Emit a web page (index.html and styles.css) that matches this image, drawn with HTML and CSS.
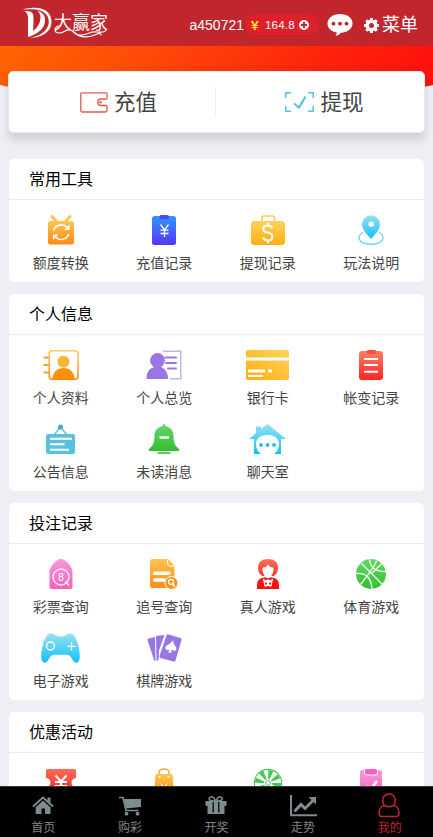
FILE: index.html
```html
<!DOCTYPE html>
<html lang="zh-CN">
<head>
<meta charset="utf-8">
<meta name="viewport" content="width=device-width, initial-scale=1">
<title>我的</title>
<link rel="stylesheet" href="styles.css">
</head>
<body>
<svg class="defs" width="0" height="0" aria-hidden="true">
  <defs>
    <linearGradient id="orange" x2="0" y2="1"><stop stop-color="#ffc550"/><stop offset="1" stop-color="#ff8a13"/></linearGradient>
    <linearGradient id="yellow" x2="0" y2="1"><stop stop-color="#ffd25a"/><stop offset="1" stop-color="#ffb010"/></linearGradient>
    <linearGradient id="gold" y1="1" x2="1" y2="0"><stop stop-color="#ffad0d"/><stop offset="1" stop-color="#ffd45f"/></linearGradient>
    <linearGradient id="blue" x2="0" y2="1"><stop stop-color="#3196ff"/><stop offset="1" stop-color="#5735f4"/></linearGradient>
    <linearGradient id="sky" x2="0" y2="1"><stop stop-color="#96e2ef"/><stop offset="1" stop-color="#12c0fc"/></linearGradient>
    <linearGradient id="amber" gradientUnits="userSpaceOnUse" x1="0" y1="0" x2="0" y2="30"><stop stop-color="#ffcf60"/><stop offset="1" stop-color="#ff860a"/></linearGradient>
    <linearGradient id="red" x2="0" y2="1"><stop stop-color="#ff8065"/><stop offset="1" stop-color="#ff2424"/></linearGradient>
    <linearGradient id="coupon" x2="0" y2="1"><stop stop-color="#ff6b54"/><stop offset="1" stop-color="#f8201c"/></linearGradient>
    <linearGradient id="scarlet" gradientUnits="userSpaceOnUse" x1="0" y1="0" x2="0" y2="30"><stop stop-color="#ff7458"/><stop offset=".8" stop-color="#fa1010"/></linearGradient>
    <linearGradient id="green" x2="0" y2="1"><stop stop-color="#65d76a"/><stop offset="1" stop-color="#35bd35"/></linearGradient>
    <linearGradient id="pink" x2="0" y2="1"><stop stop-color="#f79ad9"/><stop offset="1" stop-color="#ff5ebd"/></linearGradient>
    <linearGradient id="band" x2="1" y2=".15"><stop stop-color="#ff6400"/><stop offset=".35" stop-color="#ff4b08"/><stop offset=".7" stop-color="#ff280b"/><stop offset="1" stop-color="#ff120d"/></linearGradient>
  </defs>
</svg>
<div class="app">
  <header class="topbar">
    <svg class="logo" width="90" height="34" viewBox="0 0 90 34">
      <path d="M1 3.500Q7 1.500 14 1.800C25 2 31 8 30.500 17C30 26 20 32 8 32.200C20 30 27.500 24 27.800 16C28 8 21 3.500 12 3.300Q6 3 1 3.500Z" fill="#fff"/>
      <path d="M3.500 5Q10.500 4.500 12 8Q13 12 12 25Q19 20 19.500 12Q19.500 7 16 4.500Q25 7 24 16Q22.500 26 7 31V12Q7 7 3.500 5Z" fill="#fff"/>
      <path d="M37 20C33 22 33 27 38 27C43 27 45 23 49 24C54 25 52 29 60 29C68 29 68 25 76 26C84 27 87 24 83 22M53 26C58 32 68 32 75 28.500Q80 26 80 29" fill="none" stroke="#fff" stroke-width="1.200" stroke-linecap="round"/>
      <text class="logo-text" x="33" y="22.500">大赢家</text>
    </svg>
    <div class="account">
      <span class="user">a450721</span>
      <span class="balance"><span class="yen">￥</span><span class="amount">164.8</span>
        <svg width="10" height="10" viewBox="0 0 10 10"><circle cx="5" cy="5" r="5" fill="#fff"/><path d="M5 2v6M2 5h6" stroke="#d8212b" stroke-width="2"/></svg>
      </span>
      <svg class="chat" width="26" height="23" viewBox="0 0 26 23"><path d="M13 0C20.500 0 25.500 4 25.500 9.500S20 18.500 14 18.700Q11.500 21.500 8.500 22Q10 20 9.700 18.400C4 17.600.5 14 .5 9.500.5 4 6 0 13 0Z" fill="#fff"/><g fill="#c1262d"><circle cx="6.500" cy="9.700" r="1.900"/><circle cx="13" cy="9.700" r="1.900"/><circle cx="19.500" cy="9.700" r="1.900"/></g></svg>
      <svg class="gear" width="15" height="15" viewBox="0 0 15 15"><circle cx="7.500" cy="7.500" r="4.200" fill="none" stroke="#fff" stroke-width="3.400"/><path d="M7.500 0v3M7.500 12v3M0 7.500h3M12 7.500h3M2.200 2.200l2 2M10.800 10.800l2 2M12.800 2.200l-2 2M4.200 10.800l-2 2" stroke="#fff" stroke-width="3"/></svg>
      <span class="menu">菜单</span>
    </div>
  </header>
  <svg class="band" width="433" height="66" viewBox="0 0 433 66"><path d="M0 0H433V39Q216.500 90 0 39Z" fill="url(#band)"/></svg>

  <section class="wallet">
    <a class="action">
      <svg width="28" height="21" viewBox="0 0 28 21" fill="none" stroke="#e9554c" stroke-width="1.300"><path d="M27 6V2Q27 .8 25.500.8H2Q.8.8.8 2V18.500Q.8 20 2.300 20H25.500Q27 20 27 18.500V14M27.300 7H20.500A3.300 3.300 0 0 0 20.500 13.500H27.300"/><circle cx="20.500" cy="10.200" r=".6"/></svg>
      <span>充值</span>
    </a>
    <a class="action second">
      <svg width="29" height="20" viewBox="0 0 29 20" fill="none" stroke="#57c3dd" stroke-width="1.500"><path d="M.8 6V.8H6M23 .8H28.200V6M28.200 14V19.200H23M6 19.200H.8V14"/><path d="M9 11.500L14 15.500L20.500 4.500" stroke-width="2.200"/></svg>
      <span>提现</span>
    </a>
  </section>

  <section class="panel">
    <h2>常用工具</h2>
    <div class="grid">
      <a class="cell"><svg width="26" height="30" viewBox="0 0 26 30"><path d="M4 1.500L9 7M22 1.500L17 7" stroke="#ffc255" stroke-width="3" stroke-linecap="round"/><rect y="6" width="26" height="23.500" rx="2.500" fill="url(#orange)"/><g fill="none" stroke="#fff" stroke-width="1.600"><path d="M5.500 15.500A8 8 0 0 1 19 12.500M20.800 19A8 8 0 0 1 7.500 22"/></g><path d="M21.500 9.500V15H16ZM5 25V19.500H10.500Z" fill="#fff"/></svg><span>额度转换</span></a>
      <a class="cell"><svg width="24" height="30" viewBox="0 0 24 30"><rect y="1" width="24" height="29" rx="2.500" fill="url(#blue)"/><rect x="7.500" y="0" width="9.500" height="4" rx="1.500" fill="#5145ff"/><path d="M8.500 9.500L12.500 15L16.500 9.500M12.500 15V22M8.500 15.200H16.500M8.500 18.500H16.500" fill="none" stroke="#fff" stroke-width="1.300"/></svg><span>充值记录</span></a>
      <a class="cell"><svg width="34" height="30" viewBox="0 0 34 30"><path d="M11 6V3Q11 1 13 1H21.500Q23.500 1 23.500 3V6" fill="none" stroke="#ffcc59" stroke-width="1.600"/><rect y="6" width="34" height="24" rx="3.500" fill="url(#yellow)"/><path d="M21.500 13Q20 10.500 17 10.500C10.500 10.500 11 16.500 16.500 17.500C24 19 22 25.500 17 25.500Q13.500 25.500 12 22.500M17 8V10.500M17 25.500V28" fill="none" stroke="#fff" stroke-width="2"/></svg><span>提现记录</span></a>
      <a class="cell"><svg width="26" height="30" viewBox="0 0 26 30"><path d="M5 17.500C-2 21 0 29 13 29.300C26 29 28 21 21 17.500" fill="none" stroke="#64d5f3" stroke-width="1.300"/><path d="M13 .3A9 9 0 0 1 22 9.300C22 15 16 20.500 13 24C10 20.500 4 15 4 9.300A9 9 0 0 1 13 .3Z" fill="url(#sky)"/><circle cx="13.300" cy="9.200" r="2.700" fill="#fff"/></svg><span>玩法说明</span></a>
    </div>
  </section>

  <section class="panel">
    <h2>个人信息</h2>
    <div class="grid">
      <a class="cell"><svg width="36" height="30" viewBox="0 0 36 30"><path d="M.5 7.500H6M.5 15H6M.5 22.500H6" stroke="#f7a41f" stroke-width="2"/><rect x="6.200" y=".8" width="28.800" height="28.400" rx="3" fill="#fff" stroke="url(#amber)" stroke-width="1.500"/><circle cx="20.500" cy="11.800" r="6" fill="#f7b536"/><path d="M9.500 29C10 21.500 14.500 18 20.500 18S31 21.500 31.500 29Z" fill="#ff9009"/></svg><span>个人资料</span></a>
      <a class="cell"><svg width="36" height="30" viewBox="0 0 36 30"><path d="M17 1.300H34.800V28.800H24" fill="none" stroke="#c5b3f0" stroke-width="1.500"/><g fill="#9976e3"><circle cx="11.500" cy="10.500" r="7.400"/><path d="M.5 29Q0 19.500 8 17H15Q22 19.500 22 29Z"/></g><path d="M19.500 7.500H30M20 13H30M22 18.500H30" stroke="#9976e3" stroke-width="2" stroke-linecap="round"/></svg><span>个人总览</span></a>
      <a class="cell"><svg width="43" height="30" viewBox="0 0 43 30"><rect width="43" height="30" rx="2" fill="url(#gold)"/><path d="M0 9H43" stroke="#fff" stroke-width="3"/><path d="M2 21H19M22 21H26" stroke="#fff" stroke-width="3"/><path d="M2 26H17" stroke="#fff" stroke-width="2"/></svg><span>银行卡</span></a>
      <a class="cell"><svg width="24" height="30" viewBox="0 0 24 30"><rect y="1" width="24" height="29" rx="3" fill="url(#red)"/><rect x="7.500" width="10" height="4" rx="2" fill="#ff4a42"/><path d="M5 9H19M5 15H19M5 21.700H19" stroke="#fff" stroke-width="1.900"/></svg><span>帐变记录</span></a>
      <a class="cell"><svg width="29" height="30" viewBox="0 0 29 30"><path d="M8 11L14.500 3L21 11" fill="none" stroke="#57c0dc" stroke-width="1.300"/><circle cx="14.500" cy="3" r="2.600" fill="#47aec9"/><rect y="10" width="29" height="20" rx="2" fill="#59c1dc"/><path d="M4 14.700H26M4 20.200H18.500M4 25.700H23" stroke="#fff" stroke-width="2"/></svg><span>公告信息</span></a>
      <a class="cell"><svg width="30" height="30" viewBox="0 0 30 30"><path d="M15 0Q16.500.5 16.500 2.200C22 3 24.500 7 24.500 12C24.500 19 26.500 22 30 25V27H0V25C3.500 22 5.500 19 5.500 12C5.500 7 8 3 13.500 2.200Q13.500.5 15 0Z" fill="url(#green)"/><path d="M10.500 13.500H20" stroke="#fff" stroke-width="2.400"/><path d="M8.500 29H21.500" stroke="#47bc45" stroke-width="1.700"/></svg><span>未读消息</span></a>
      <a class="cell"><svg width="37" height="30" viewBox="0 0 37 30"><path d="M0 15L7 9V2.500H12V5L18.500 0L37 15H32V30H25Q30 26 30 20.500C30 14 25 11 18.500 11S7 14 7 20.500Q7 26 12 30H5V15Z" fill="url(#sky)"/><g fill="#20bde9"><circle cx="12" cy="21" r="1.900"/><circle cx="18.500" cy="21" r="1.900"/><circle cx="25" cy="21" r="1.900"/></g></svg><span>聊天室</span></a>
    </div>
  </section>

  <section class="panel">
    <h2>投注记录</h2>
    <div class="grid">
      <a class="cell"><svg width="24" height="30" viewBox="0 0 24 30"><path d="M.5 12C2 6 8 0 12 0S22 6 23.500 12V28Q23.500 30 21.500 30H2.500Q.5 30 .5 28Z" fill="url(#pink)"/><circle cx="12" cy="18" r="8" fill="none" stroke="#fff" stroke-width="1.300"/><path d="M16.500 22.500L20 26.500" stroke="#fff" stroke-width="1.600"/><text class="eight" x="12" y="21.800">8</text></svg><span>彩票查询</span></a>
      <a class="cell"><svg width="28" height="30" viewBox="0 0 28 30"><path d="M2.500 0H18L24.500 6.500V26.500Q24.500 29 22 29H2.500Q0 29 0 26.500V2.500Q0 0 2.500 0Z" fill="url(#orange)"/><path d="M17.500.5V4.500Q17.500 7 20 7H24.500" fill="none" stroke="#fff"/><path d="M4.500 14.300H19M4.500 21H14" stroke="#fff" stroke-width="3.400" stroke-linecap="round"/><circle cx="21.500" cy="24" r="6.500" fill="#fc941f" stroke="#fff"/><circle cx="21" cy="22.800" r="2.500" fill="none" stroke="#fff" stroke-width="1.300"/><path d="M22.500 24.500L24.500 27.500" stroke="#fff" stroke-width="1.600"/></svg><span>追号查询</span></a>
      <a class="cell"><svg width="22" height="30" viewBox="0 0 22 30"><path d="M0 30V26Q0 19 7 18.500H15Q22 19 22 26V30Z" fill="url(#scarlet)"/><path d="M1 9C1 3 5 0 11 0S21 3 21 9Q20.500 15 16.500 17H5.500Q1.500 15 1 9Z" fill="url(#scarlet)"/><path d="M6.500 8.500Q9.500 8 11 5.500Q13 9 16.500 8.500Q17 14 14.500 16.500V18.500L11 20L7.500 18.500V16.500Q5 14 5.500 9Z" fill="#fff"/><path d="M6 20L7.500 27.500H14.500L16 20Z" fill="#fff"/><path d="M7.500 18L11 19.500L14.500 18V21.500L11 20.500L7.500 21.500ZM8 23.500H10V25.500H8ZM12 23.500H14V25.500H12ZM10 27H12V28H10Z" fill="#f51515"/></svg><span>真人游戏</span></a>
      <a class="cell"><svg width="30" height="30" viewBox="0 0 30 30"><circle cx="15" cy="15" r="15" fill="url(#green)"/><path d="M5.500 4.500L26.500 25.500M20.500 1.500Q20 6 4.500 25.500M13.500 0Q14.500 13 30 12.500M0 14.500Q15 13 16 30M26 4.500L15 15" fill="none" stroke="#e8ffe8" stroke-width="1.400"/></svg><span>体育游戏</span></a>
      <a class="cell"><svg width="39" height="30" viewBox="0 0 39 30"><path d="M8.500.8Q11 0 14 2Q19.500 5.500 25 2Q28 0 30.500.8C35 2 38.800 15 38.800 23C38.800 31 34 31.500 31.500 26.500Q29 21.800 26 21.800H13Q10 21.800 7.500 26.500C5 31.500.2 31 .2 23C.2 15 4 2 8.500.8Z" fill="url(#sky)"/><circle cx="9.500" cy="13" r="4" fill="none" stroke="#fff" stroke-width="1.500"/><path d="M30.500 9V17.500M26.300 13.300H34.700" stroke="#fff" stroke-width="1.300"/></svg><span>电子游戏</span></a>
      <a class="cell"><svg width="35" height="30" viewBox="0 0 35 30"><g fill="#9976e3"><path d="M.5 7Q0 6 1.500 5.500L8 4L8.500 27.500Q7.500 28.500 7 27Z"/><path d="M9 4Q9 2.800 10.500 2.700L17.500 2L12 17.500L11.500 27L9.500 28Z"/><path d="M19.500 2.200Q20 1 21.500 1.500L33.500 5Q35 5.500 34.500 7L28.500 27.500Q28 29 26.500 28.500L13.500 25Q12 24.500 12.500 23Z"/></g><path d="M26 7.500Q23 11 19.500 12.500C17 14.500 19 18.500 22.500 16.500Q22.500 18.500 20.500 19.500H25Q24 18.500 24.500 16.500C28 19.500 31 16.500 28.500 13.500Q26.500 11 26 7.500Z" fill="#fff"/></svg><span>棋牌游戏</span></a>
    </div>
  </section>

  <section class="panel">
    <h2>优惠活动</h2>
    <div class="grid">
      <a class="cell"><svg width="30" height="30" viewBox="0 0 30 30"><path d="M1.500 1H28.500Q30 1 30 2.500V10Q25.500 10.500 25.500 14.500T30 19V29H0V19Q4.500 18.500 4.500 14.500T0 10V2.500Q0 1 1.500 1Z" fill="url(#coupon)"/><path d="M9.500 7.500L15 13.500L20.500 7.500M9 14H21M9 18H21M15 13V24" fill="none" stroke="#fff" stroke-width="2.200"/></svg></a>
      <a class="cell"><svg width="20" height="30" viewBox="0 0 20 30"><path d="M5 8V5Q5 1 10 1T15 5V8" fill="none" stroke="#f7a634" stroke-width="1.500"/><path d="M3 6H17Q18.500 6 18.700 8L20 27Q20 29 18 29H2Q0 29 0 27L1.300 8Q1.500 6 3 6Z" fill="url(#orange)"/><circle cx="5.500" cy="9" r="1" fill="#fff"/><circle cx="14.500" cy="9" r="1" fill="#fff"/><path d="M6.500 15.500L10 19L13.500 15.500M7 20H13M10 19V25" fill="none" stroke="#fff"/></svg></a>
      <a class="cell"><svg width="30" height="30" viewBox="0 0 30 30"><circle cx="15" cy="15" r="13.700" fill="#fff" stroke="#46c858" stroke-width="1.200"/><circle cx="15" cy="15" r="8.500" fill="none" stroke="#46c858" stroke-width="9" stroke-dasharray="3.338 3.338"/><circle cx="15" cy="15" r="3.500" fill="#fff"/><circle cx="15" cy="15" r="2.400" fill="none" stroke="#46c858"/></svg></a>
      <a class="cell"><svg width="22" height="30" viewBox="0 0 22 30"><rect y="2" width="22" height="27" rx="2.500" fill="url(#pink)"/><rect x="4.500" y=".5" width="13" height="6.500" rx="2" fill="#ff60c0" stroke="#fff"/><path d="M6 18L10 22L17 13" fill="none" stroke="#fff" stroke-width="2.500"/></svg></a>
    </div>
  </section>
</div>

<nav class="tabbar">
  <a class="tab"><svg width="22" height="22" viewBox="0 0 22 22"><path d="M1 11.500L11 2.500L21 11.500" fill="none" stroke="#7d8c8d" stroke-width="2"/><path d="M15.500 2.500H18.500V8L15.500 5.500ZM11 5.500L18.500 12.300V19H13V13.500H9.500V19H3.700V12.300Z" fill="#7d8c8d"/></svg><span>首页</span></a>
  <a class="tab"><svg width="24" height="22" viewBox="0 0 24 22"><path d="M1 2.500H5L8 15.500H20.500" fill="none" stroke="#7d8c8d" stroke-width="1.700"/><path d="M6 4H23V12L8 13.500Z" fill="#7d8c8d"/><circle cx="8.500" cy="18.700" r="1.900" fill="#7d8c8d"/><circle cx="19.500" cy="18.700" r="1.900" fill="#7d8c8d"/></svg><span>购彩</span></a>
  <a class="tab"><svg width="22" height="22" viewBox="0 0 22 22"><path d="M10.500 6C1 7 4 .5 7.500 2Q9.500 3 10.500 6ZM11 6C20.500 7 17.500.5 14 2Q12 3 11 6Z" fill="none" stroke="#7d8c8d" stroke-width="1.600"/><path d="M.5 6H21.500V11H.5ZM2.500 11H19.500V19H2.500Z" fill="#7d8c8d"/><path d="M8.200 7V17.500M13.800 7V17.500" stroke="#000" stroke-width="1.200"/></svg><span>开奖</span></a>
  <a class="tab"><svg width="27" height="22" viewBox="0 0 27 22"><path d="M1 0V20.200H27" fill="none" stroke="#7d8c8d" stroke-width="2"/><path d="M4.500 16.500L11 9.500L15 13.500L23 5.500" fill="none" stroke="#7d8c8d" stroke-width="3"/><path d="M18.500 2H26V9.500Z" fill="#7d8c8d"/></svg><span>走势</span></a>
  <a class="tab active"><svg class="me" width="22" height="25" viewBox="0 0 22 25"><path d="M6.500 12.500C3 8 5 1 11 1S19 8 15.500 12.500Q11 15 6.500 12.500C2.500 13 1 17 1 20Q1 23.500 4 23.500H18Q21 23.500 21 20C21 17 19.500 13 15.500 12.500" fill="none" stroke="#c1262d" stroke-width="1.500"/></svg><span>我的</span></a>
</nav>
</body>
</html>
```
FILE: styles.css
```css
* { box-sizing: border-box; }

body {
  margin: 0;
  background: #efeef4;
  color: #444;
  font-family: "Liberation Sans", "Noto Sans CJK SC", sans-serif;
  overflow: hidden;
}

svg { display: block; flex: none; }
.defs { position: absolute; }

.app { height: 837px; overflow: hidden; }

.topbar {
  display: flex;
  align-items: center;
  justify-content: space-between;
  height: 46px;
  padding: 0 15px 0 21px;
  background: #c1262d;
  color: #fff;
}
.logo-text {
  fill: #fff;
  font: 18px "Noto Sans CJK SC", sans-serif;
}
.account { display: flex; align-items: center; padding-top: 4px; }
.user { font-size: 14px; line-height: 20px; }
.balance {
  display: flex;
  align-items: center;
  width: 74px;
  height: 21px;
  margin: -1px 8px 0 1px;
  padding-left: 4px;
  border-radius: 11px;
  background: #df2029;
  font-size: 11.500px;
}
.balance svg { margin-left: 4px; }
.yen { width: 16px; color: #ffeb3b; font-weight: 700; }
.amount { letter-spacing: .2px; }
.chat { margin-right: 11px; }
.gear { margin-right: 3px; }
.menu { font-size: 18px; line-height: 24px; }

.wallet {
  position: relative;
  display: flex;
  height: 62px;
  margin: -41px 8px 26px;
  border: 1px solid #e8e9f3;
  border-radius: 5px;
  background: #fff;
  box-shadow: 0 7px 9px rgba(0, 0, 0, .13);
}
.action {
  display: flex;
  flex: none;
  width: 206px;
  align-items: center;
  justify-content: center;
  gap: 6px;
  padding-left: 13px;
  font-size: 21.500px;
  line-height: 30px;
}
.second {
  width: 209px;
  margin: 15px 0;
  padding-left: 9px;
  border-left: 1px solid #eee;
}
.action span { margin-top: 1px; }

.panel {
  height: 197px;
  margin: 0 9px 12px;
  border-radius: 5px;
  background: #fff;
}
.panel:nth-of-type(2) { height: 123px; }
.panel h2 {
  height: 41px;
  margin: 0;
  padding-left: 20px;
  border-bottom: 1px solid #ebebef;
  color: #000;
  font-size: 16px;
  font-weight: 400;
  line-height: 42px;
}
.grid {
  display: grid;
  grid-template-columns: repeat(4, 1fr);
  grid-auto-rows: 74px;
  padding: 15px 1px 0 0;
}
.cell {
  display: flex;
  flex-direction: column;
  align-items: center;
  font-size: 14px;
  line-height: 20px;
}
.cell span { margin-top: 8px; }
.eight {
  fill: #fff;
  font: 10px "Liberation Sans", sans-serif;
  text-anchor: middle;
}

.tabbar {
  position: fixed;
  inset: auto 0 0;
  display: flex;
  height: 51px;
  border-top: 1px solid #393939;
  background: #000;
  color: #858585;
}
.tab {
  display: flex;
  flex: 1;
  flex-direction: column;
  align-items: center;
  padding-top: 8px;
  font-size: 12px;
  line-height: 16px;
}
.tab span { margin-top: 3px; }
.me { margin: -2px 2px -1px 0; }
.active { color: #c1262d; }
```
